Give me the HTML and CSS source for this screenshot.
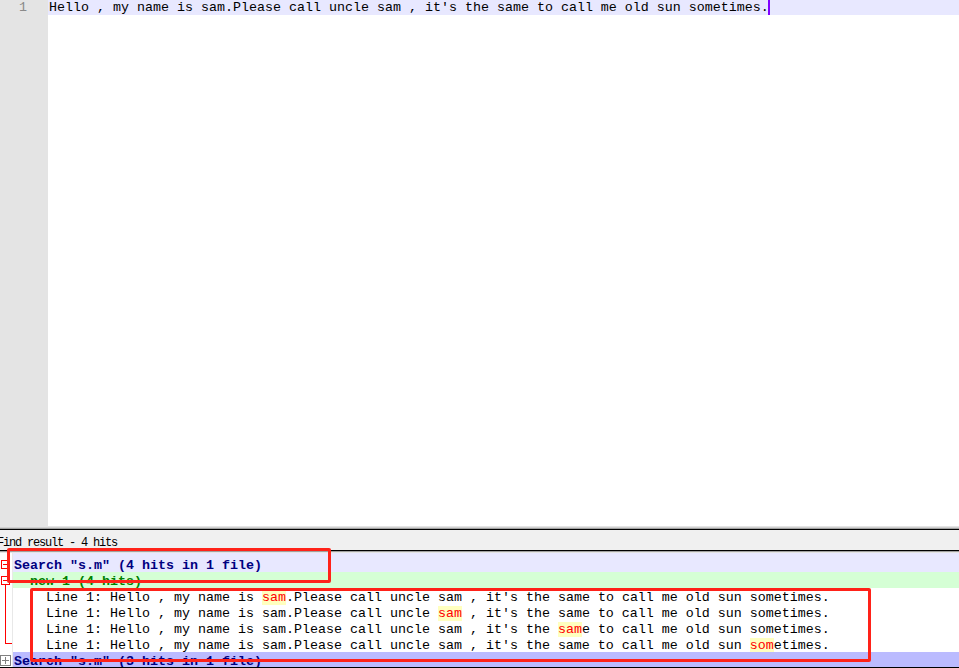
FILE: index.html
```html
<!DOCTYPE html>
<html>
<head>
<meta charset="utf-8">
<title>Find result</title>
<link rel="stylesheet" href="styles.css">
</head>
<body>
<div class="app">
  <div class="editor">
    <div class="gutter"><div class="ln">1</div></div>
    <div class="text">
      <div class="line current">Hello , my name is sam.Please call uncle sam , it's the same to call me old sun sometimes.<span class="caret"></span></div>
    </div>
  </div>
  <div class="splitter"></div>
  <div class="panel-title">Find result - 4 hits</div>
  <div class="panel-sep"></div>
  <div class="results">
    <div class="row search first"><div class="fold"><span class="box minus"></span></div><div class="content">Search "s.m" (4 hits in 1 file)</div></div>
    <div class="row file"><div class="fold fold-start"><span class="box minus"></span></div><div class="content">  new 1 (4 hits)</div></div>
    <div class="row hit"><div class="fold fold-mid"></div><div class="content">    Line 1: Hello , my name is <mark class="hl">sam</mark>.Please call uncle sam , it's the same to call me old sun sometimes.</div></div>
    <div class="row hit"><div class="fold fold-mid"></div><div class="content">    Line 1: Hello , my name is sam.Please call uncle <mark class="hl">sam</mark> , it's the same to call me old sun sometimes.</div></div>
    <div class="row hit"><div class="fold fold-mid"></div><div class="content">    Line 1: Hello , my name is sam.Please call uncle sam , it's the <mark class="hl">sam</mark>e to call me old sun sometimes.</div></div>
    <div class="row hit"><div class="fold fold-end"></div><div class="content">    Line 1: Hello , my name is sam.Please call uncle sam , it's the same to call me old sun <mark class="hl">som</mark>etimes.</div></div>
    <div class="row search search2"><div class="fold"><span class="box plus"></span></div><div class="content">Search "s.m" (3 hits in 1 file)</div></div>
  </div>
  <div class="annot a1"></div>
  <div class="annot a2"></div>
</div>
</body>
</html>
```
FILE: styles.css
```css
html, body {
  margin: 0;
  padding: 0;
  background: #fff;
}
body {
  font-family: "Liberation Mono", "Courier New", monospace;
  font-size: 13.333px;
  color: #000;
}
.app {
  position: relative;
  width: 959px;
  height: 668px;
  overflow: hidden;
  background: #fff;
}
.editor {
  display: flex;
  height: 526px;
}
.gutter {
  width: 48px;
  flex: none;
  background: #e4e4e4;
}
.ln {
  height: 15px;
  line-height: 15px;
  color: #8a8a8a;
  text-align: right;
  padding-right: 21px;
}
.text {
  flex: 1;
  min-width: 0;
}
.line {
  height: 15px;
  line-height: 15px;
  padding-left: 1px;
  white-space: pre;
}
.current {
  background: #e8e8ff;
}
.caret {
  display: inline-block;
  width: 2px;
  height: 15px;
  margin-left: -1px;
  vertical-align: top;
  background: #8000ff;
}
.splitter {
  height: 3px;
  background: linear-gradient(#e4e4e4 0 1px, #d0d0d0 1px 2px, #a0a0a0 2px 3px);
}
.panel-title {
  height: 17px;
  padding-top: 3px;
  border-top: 1px solid #000;
  border-bottom: 1px solid #000;
  background: #f0f0f0;
  font-size: 12px;
  letter-spacing: -1.2px;
  line-height: 20px;
  text-indent: -3px;
  white-space: pre;
}
.panel-sep {
  height: 2px;
  background: linear-gradient(#a0a0a0 0 1px, #e4e4e4 1px 2px);
}
.results {
  height: 114px;
  overflow: hidden;
  border-bottom: 1px solid #000;
}
.row {
  display: flex;
  height: 16px;
}
.row.first {
  height: 19px;
}
.fold {
  width: 12px;
  flex: none;
  display: flex;
  align-items: center;
  border-right: 1px solid #e8e8e8;
  background: #fff;
}
.first .fold {
  padding-top: 3px;
}
.box {
  display: block;
  box-sizing: border-box;
  width: 9px;
  height: 9px;
  margin-left: 1px;
  border: 1px solid #ff0000;
}
.box.minus {
  background: linear-gradient(#ff0000, #ff0000) center / 5px 1px no-repeat, #fff;
}
.box.plus {
  width: 11px;
  height: 11px;
  margin-left: 0;
  border-color: #808080;
  background:
    linear-gradient(#808080, #808080) center / 7px 1px no-repeat,
    linear-gradient(#808080, #808080) center / 1px 7px no-repeat,
    #fff;
}
.fold-start {
  background: linear-gradient(#ff0000, #ff0000) 5px 12px / 1px 4px no-repeat, #fff;
}
.fold-mid {
  background: linear-gradient(#ff0000, #ff0000) 5px 0 / 1px 100% no-repeat, #fff;
}
.fold-end {
  background:
    linear-gradient(#ff0000, #ff0000) 5px 0 / 1px 8px no-repeat,
    linear-gradient(#ff0000, #ff0000) 5px 7px / 7px 1px no-repeat,
    #fff;
}
.content {
  flex: 1;
  min-width: 0;
  box-sizing: border-box;
  height: 100%;
  padding-top: 2px;
  padding-left: 1px;
  line-height: 16px;
  white-space: pre;
}
.first .content {
  padding-top: 5px;
}
.search .content {
  background: #e8e8ff;
  color: #000080;
  font-weight: bold;
}
.search2 .content {
  background: #bbbbff;
}
.file .content {
  background: #d5ffd5;
  color: #008000;
  font-weight: bold;
}
.hit .content {
  color: #000;
}
.hl {
  background: #ffffbf;
  color: #ff0000;
}
.annot {
  position: absolute;
  box-sizing: border-box;
  border: 3px solid #ff2219;
  border-radius: 2px;
}
.a1 {
  left: 7px;
  top: 548px;
  width: 324px;
  height: 35px;
}
.a2 {
  left: 30px;
  top: 588px;
  width: 841px;
  height: 74px;
}
```
